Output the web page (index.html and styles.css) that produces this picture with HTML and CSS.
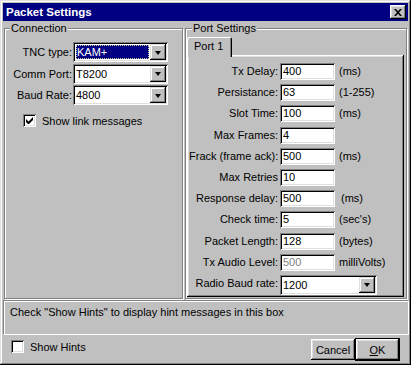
FILE: index.html
```html
<!DOCTYPE html>
<html>
<head>
<meta charset="utf-8">
<title>Packet Settings</title>
<link rel="stylesheet" href="styles.css">
</head>
<body>
<div class="window">
  <div class="titlebar">
    <span class="title">Packet Settings</span>
    <button class="close" type="button" aria-label="Close">
      <svg width="8" height="7" viewBox="0 0 8 7"><path d="M0 0h2l2 2.2L6 0h2L5 3.5 8 7H6L4 4.8 2 7H0l3-3.5z" fill="#000"/></svg>
    </button>
  </div>
  <div class="main">
    <fieldset class="group conn">
      <legend>Connection</legend>
      <div class="conn-form">
        <label class="lbl">TNC type:</label>
        <div class="combo"><span class="combo-text"><span class="sel">KAM+</span></span><span class="arrow"><i class="tri"></i></span></div>
        <label class="lbl">Comm Port:</label>
        <div class="combo"><span class="combo-text">T8200</span><span class="arrow"><i class="tri"></i></span></div>
        <label class="lbl">Baud Rate:</label>
        <div class="combo"><span class="combo-text">4800</span><span class="arrow"><i class="tri"></i></span></div>
      </div>
      <div class="check-row link">
        <span class="checkbox"><svg width="7" height="7" viewBox="0 0 7 7"><path d="M0 2v3l2 2h1l4-4V0L2.5 4.5z" fill="#000"/></svg></span>
        <span>Show link messages</span>
      </div>
    </fieldset>
    <fieldset class="group port">
      <legend>Port Settings</legend>
      <div class="tabs"><div class="tab">Port 1</div></div>
      <div class="panel">
        <div class="pform">
          <label class="plbl">Tx Delay:</label><div class="field">400</div><span class="unit">(ms)</span>
          <label class="plbl">Persistance:</label><div class="field">63</div><span class="unit">(1-255)</span>
          <label class="plbl">Slot Time:</label><div class="field">100</div><span class="unit">(ms)</span>
          <label class="plbl">Max Frames:</label><div class="field">4</div><span class="unit"></span>
          <label class="plbl">Frack (frame ack):</label><div class="field">500</div><span class="unit">(ms)</span>
          <label class="plbl">Max Retries</label><div class="field">10</div><span class="unit"></span>
          <label class="plbl">Response delay:</label><div class="field">500</div><span class="unit unit-wide">(ms)</span>
          <label class="plbl">Check time:</label><div class="field">5</div><span class="unit">(sec's)</span>
          <label class="plbl">Packet Length:</label><div class="field">128</div><span class="unit">(bytes)</span>
          <label class="plbl">Tx Audio Level:</label><div class="field disabled">500</div><span class="unit">milliVolts)</span>
          <label class="plbl">Radio Baud rate:</label>
          <div class="combo wide"><span class="combo-text">1200</span><span class="arrow"><i class="tri"></i></span></div>
        </div>
      </div>
    </fieldset>
  </div>
  <div class="hint">Check "Show Hints" to display hint messages in this box</div>
  <div class="footer">
    <div class="check-row hints">
      <span class="checkbox"></span>
      <span>Show Hints</span>
    </div>
    <div class="buttons">
      <button class="btn" type="button">Cancel</button>
      <button class="btn default" type="button"><u>O</u>K</button>
    </div>
  </div>
</div>
</body>
</html>
```
FILE: styles.css
```css
* { box-sizing: border-box; }

body {
  margin: 0;
  background: #c0c0c0;
  font-family: "Liberation Sans", Arial, sans-serif;
  font-size: 11px;
  color: #000;
}

.window {
  width: 411px;
  height: 365px;
  padding: 3px;
  background: #c0c0c0;
  display: flex;
  flex-direction: column;
  box-shadow: inset -1px -1px #000, inset 1px 1px #dfdfdf,
              inset -2px -2px #808080, inset 2px 2px #fff;
}

.titlebar {
  height: 18px;
  flex: none;
  background: #000080;
  color: #fff;
  display: flex;
  align-items: center;
  justify-content: space-between;
  padding: 0 2px 0 3px;
}

.title {
  font-weight: bold;
  font-size: 11.5px;
}

.close {
  width: 16px;
  height: 14px;
  padding: 0;
  border: 0;
  background: #c0c0c0;
  display: flex;
  align-items: center;
  justify-content: center;
  box-shadow: inset -1px -1px #000, inset 1px 1px #fff,
              inset -2px -2px #808080, inset 2px 2px #dfdfdf;
}

.main {
  display: flex;
  height: 278px;
  flex: none;
}

.group {
  margin: 0;
  min-width: 0;
  border: 1px solid #808080;
  box-shadow: inset 1px 1px #fff, 1px 1px #fff;
}

.group legend {
  margin-left: 5px;
  padding: 0 1px;
  line-height: 14px;
  background: #c0c0c0;
}

.conn {
  width: 179px;
  margin-left: 1px;
  padding: 7px 0 0 0;
}

.port {
  width: 222px;
  margin-left: 2px;
  padding: 2px 2px 1px 1px;
  display: flex;
  flex-direction: column;
}

.conn-form {
  display: grid;
  grid-template-columns: 67px 95px;
  column-gap: 1px;
  row-gap: 1.5px;
  grid-auto-rows: 20px;
  align-items: center;
}

.lbl {
  text-align: right;
  white-space: nowrap;
}

.combo {
  height: 20px;
  background: #fff;
  display: flex;
  padding: 2px;
  box-shadow: inset 1px 1px #808080, inset -1px -1px #fff,
              inset 2px 2px #000, inset -2px -2px #dfdfdf;
}

.combo-text {
  flex: 1;
  display: flex;
  align-items: center;
  padding-left: 1px;
  min-width: 0;
}

.sel {
  flex: 1;
  align-self: stretch;
  margin: 1px 1px 1px 0;
  background: #000080;
  color: #fff;
  outline: 1px dotted #c8c8a0;
  outline-offset: -1px;
  display: flex;
  align-items: center;
  padding-left: 1px;
}

.arrow {
  width: 16px;
  height: 16px;
  flex: none;
  background: #c0c0c0;
  display: flex;
  align-items: center;
  justify-content: center;
  box-shadow: inset -1px -1px #000, inset 1px 1px #dfdfdf,
              inset -2px -2px #808080, inset 2px 2px #fff;
}

.tri {
  width: 0;
  height: 0;
  border-left: 3.5px solid transparent;
  border-right: 3.5px solid transparent;
  border-top: 4px solid #000;
  margin-top: 1px;
}

.check-row {
  display: flex;
  align-items: center;
  gap: 6px;
}

.link {
  margin: 9px 0 0 18px;
}

.checkbox {
  width: 13px;
  height: 13px;
  flex: none;
  background: #fff;
  display: flex;
  align-items: center;
  justify-content: center;
  box-shadow: inset 1px 1px #808080, inset -1px -1px #fff,
              inset 2px 2px #000, inset -2px -2px #dfdfdf;
}

.tabs {
  display: flex;
  flex: none;
  position: relative;
  z-index: 1;
  margin-bottom: -2px;
}

.tab {
  width: 45px;
  height: 20px;
  padding: 3px 0 0 7px;
  background: #c0c0c0;
  border-radius: 2px 2px 0 0;
  box-shadow: inset 1px 1px #fff, inset -1px 0 #000, inset -2px 0 #808080;
}

.panel {
  flex: 1;
  padding: 8px 2px 2px 2px;
  box-shadow: inset -1px -1px #000, inset 1px 1px #fff,
              inset -2px -2px #808080, inset 2px 2px #dfdfdf;
}

.pform {
  display: grid;
  grid-template-columns: 91px 55px 1fr;
  grid-auto-rows: 17px;
  row-gap: 4.2px;
  align-items: start;
}

.plbl {
  text-align: right;
  padding-right: 2px;
  white-space: nowrap;
  line-height: 17px;
}

.field {
  height: 17px;
  background: #fff;
  padding-left: 3px;
  line-height: 17px;
  box-shadow: inset 1px 1px #808080, inset -1px -1px #fff,
              inset 2px 2px #000, inset -2px -2px #dfdfdf;
}

.field.disabled {
  color: #808080;
}

.unit {
  padding-left: 4px;
  line-height: 17px;
  white-space: nowrap;
}

.unit-wide {
  padding-left: 6px;
}

.combo.wide {
  grid-column: 2 / 4;
  width: 97px;
}

.hint {
  height: 34px;
  flex: none;
  margin-top: 1px;
  padding: 4px 6px;
  line-height: 14px;
  border-top: 1px solid #808080;
  border-left: 1px solid #808080;
  box-shadow: inset 1px 1px #fff, 1px 1px #fff;
}

.footer {
  flex: 1;
  display: flex;
  justify-content: space-between;
  align-items: flex-start;
  padding: 6px 8px 0 8px;
}

.hints {
  gap: 6px;
}

.buttons {
  display: flex;
  align-items: center;
  margin-top: -2px;
}

.btn {
  font: inherit;
  color: #000;
  border: 0;
  padding: 0;
  width: 44px;
  height: 21px;
  background: #c0c0c0;
  box-shadow: inset -1px -1px #000, inset 1px 1px #fff,
              inset -2px -2px #808080, inset 2px 2px #dfdfdf;
}

.btn.default {
  width: 45px;
  height: 23px;
  box-shadow: inset 0 0 0 1px #000, inset -2px -2px #000, inset 2px 2px #fff,
              inset -3px -3px #808080, inset 3px 3px #dfdfdf;
}
```
